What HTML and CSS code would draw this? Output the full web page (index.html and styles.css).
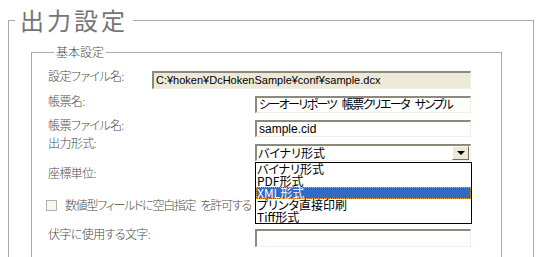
FILE: index.html
```html
<!DOCTYPE html>
<html lang="ja">
<head>
    <meta charset="UTF-8">
    <title>出力設定</title>
    <link rel="stylesheet" href="styles.css">
</head>
<body>
    <fieldset class="panel">
        <legend class="panel-title">出力設定</legend>

        <div class="panel-body">
            <fieldset class="group">
                <legend class="group-title">基本設定</legend>

                <div class="form-grid">
                    <label class="field-label">設定ファイル名:</label>
                    <div class="text-box readonly wide">C:¥hoken¥DcHokenSample¥conf¥sample.dcx</div>

                    <label class="field-label span-label">帳票名:</label>
                    <div class="text-box jp">シーオーリポーツ 帳票クリエータ サンプル</div>

                    <label class="field-label span-label">帳票ファイル名:</label>
                    <div class="text-box">sample.cid</div>

                    <label class="field-label span-label raised">出力形式:</label>
                    <div class="select-box">
                        <span class="select-value">バイナリ形式</span>
                        <span class="select-button"><span class="arrow"></span></span>

                        <ul class="select-list">
                            <li>バイナリ形式</li>
                            <li>PDF形式</li>
                            <li class="selected">XML形式</li>
                            <li>プリンタ直接印刷</li>
                            <li>Tiff形式</li>
                        </ul>
                    </div>

                    <label class="field-label span-label">座標単位:</label>
                </div>

                <div class="check-row">
                    <span class="check-box"></span>
                    <span class="check-text">数値型フィールドに空白指定 を許可する</span>
                </div>

                <div class="form-grid last-row">
                    <label class="field-label span-label">伏字に使用する文字:</label>
                    <div class="text-box"></div>
                </div>
            </fieldset>
        </div>
    </fieldset>
</body>
</html>
```

FILE: styles.css
```css
* {
    margin: 0;
    padding: 0;
    box-sizing: border-box;
}

body {
    font-family: "Noto Sans CJK JP", sans-serif;
    font-feature-settings: "palt";
    background-color: #fff;
    overflow: hidden;
}

.panel {
    margin: 6px 0 0 8px;
    width: 526px;
    height: 251px;
    border: 1px solid #a9a9a9;
    border-bottom: none;
    min-width: 0;
}

.panel-title {
    margin-left: 6px;
    padding: 0 5px;
    font-size: 24px;
    line-height: 28px;
    letter-spacing: 3px;
    color: #747474;
}

.panel-body {
    padding: 10px 0 0 22px;
}

.group {
    width: 471px;
    height: 213px;
    border: 1px solid #a9a9a9;
    border-bottom: none;
    min-width: 0;
    padding: 11px 0 0 16px;
}

.group-title {
    margin-left: 6px;
    padding: 0 2px;
    font-size: 12px;
    line-height: 16px;
    font-weight: 300;
    color: #4a4a4a;
}

.form-grid {
    display: grid;
    grid-template-columns: 104px 103px 216px;
    row-gap: 7px;
}

.field-label {
    grid-column: 1;
    align-self: start;
    margin-top: -3px;
    font-size: 12px;
    line-height: 16px;
    font-weight: 300;
    letter-spacing: -0.6px;
    color: #4a4a4a;
    white-space: nowrap;
}

.span-label {
    grid-column: 1 / 3;
}

.raised {
    margin-top: -9px;
}

.text-box {
    grid-column: 3;
    height: 17px;
    padding: 0 2px;
    border-top: 2px solid #8c897d;
    border-left: 2px solid #8c897d;
    border-right: 1px solid #f1efe2;
    border-bottom: 1px solid #f1efe2;
    font-family: "Liberation Sans", "Noto Sans CJK JP", sans-serif;
    font-size: 12px;
    line-height: 14px;
    color: #000;
    white-space: nowrap;
    overflow: hidden;
}

.text-box.jp {
    letter-spacing: -1.6px;
    word-spacing: 4px;
}

.text-box.wide {
    grid-column: 2 / 4;
    height: 18px;
    font-size: 11px;
}

.readonly {
    background-color: #ece9d8;
}

.select-box {
    grid-column: 3;
    position: relative;
    height: 17px;
    display: flex;
    align-items: center;
    border-top: 2px solid #8c897d;
    border-left: 2px solid #8c897d;
    border-right: 1px solid #f1efe2;
    border-bottom: 1px solid #f1efe2;
}

.select-value {
    flex: 1;
    padding-left: 1px;
    font-size: 12px;
    line-height: 14px;
    color: #000;
}

.select-button {
    width: 17px;
    height: 14px;
    margin-right: 1px;
    display: flex;
    align-items: center;
    justify-content: center;
    background-color: #ece9d8;
    border-top: 1px solid #fff;
    border-left: 1px solid #fff;
    border-right: 1px solid #716f64;
    border-bottom: 1px solid #716f64;
}

.arrow {
    width: 0;
    height: 0;
    border-left: 4px solid transparent;
    border-right: 4px solid transparent;
    border-top: 4px solid #000;
}

.select-list {
    position: absolute;
    top: 16px;
    left: -2px;
    width: 217px;
    list-style: none;
    background-color: #fff;
    border: 1px solid #000;
    z-index: 10;
}

.select-list li {
    height: 12px;
    padding-left: 1px;
    font-size: 12px;
    line-height: 12px;
    color: #000;
    white-space: nowrap;
}

.select-list li.selected {
    background-color: #316ac5;
    color: #fff;
    outline: 1px dotted #e8a040;
    outline-offset: -1px;
}

.check-row {
    display: flex;
    align-items: center;
    gap: 8px;
    margin: 16px 0 0 -2px;
    height: 16px;
}

.check-box {
    width: 11px;
    height: 11px;
    border: 1px solid #b5b3a8;
    background-color: #f7f6f1;
}

.check-text {
    font-size: 12px;
    line-height: 16px;
    font-weight: 300;
    letter-spacing: -1.3px;
    word-spacing: 4px;
    color: #4a4a4a;
    white-space: nowrap;
}

.last-row {
    margin-top: 16px;
}

.last-row .text-box {
    height: 18px;
}
```
